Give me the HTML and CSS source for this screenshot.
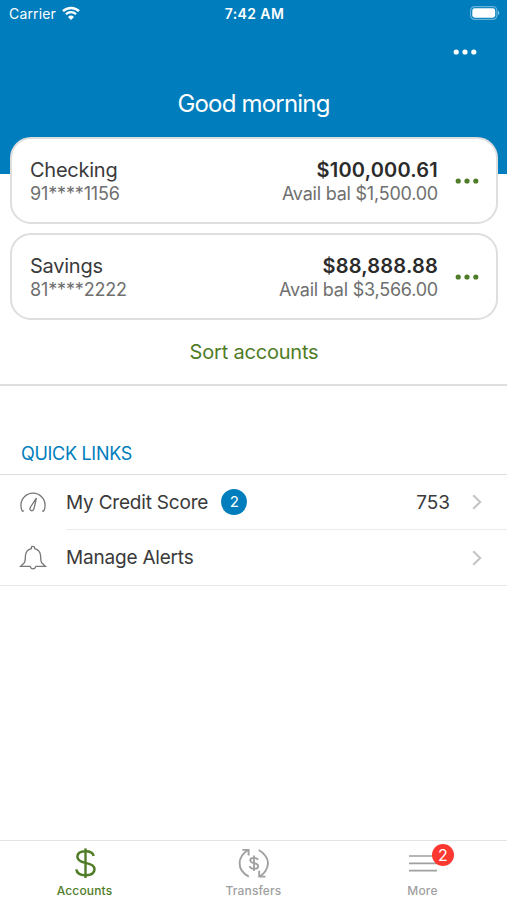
FILE: index.html
```
<!DOCTYPE html>
<html lang="en">
<head>
    <meta charset="utf-8">
    <meta name="viewport" content="width=device-width, initial-scale=1">
    <title>Accounts</title>
    <link rel="stylesheet" href="styles.css">
</head>

<body>

<header class="header">
    <div class="status">
        <div class="carrier">
            <span>Carrier</span>
            <svg width="18" height="14" viewBox="0 0 18 14">
                <path d="M1 5.2 A11.6 11.6 0 0 1 17 5.2" fill="none" stroke="#fff" stroke-width="2.5"/>
                <path d="M3.9 8.2 A7.4 7.4 0 0 1 14.1 8.2" fill="none" stroke="#fff" stroke-width="2.2"/>
                <path d="M9 14 L6 10.9 A4.3 4.3 0 0 1 12 10.9 Z" fill="#fff"/>
            </svg>
        </div>
        <div class="time">7:42 AM</div>
        <div class="battery">
            <svg width="30" height="14" viewBox="0 0 30 14">
                <rect x="0.6" y="0.6" width="26.3" height="12.8" rx="4" fill="none" stroke="#fff" stroke-opacity="0.4" stroke-width="1.2"/>
                <rect x="2.3" y="2.3" width="22.9" height="9.4" rx="2.4" fill="#fff"/>
                <path d="M28 4.8 A2.4 2.4 0 0 1 28 9.2 Z" fill="#fff" fill-opacity="0.5"/>
            </svg>
        </div>
    </div>
    <div class="toolbar">
        <svg class="dots" width="24" height="6" viewBox="0 0 24 6">
            <circle cx="3.2" cy="3" r="2.6"/>
            <circle cx="12" cy="3" r="2.6"/>
            <circle cx="20.8" cy="3" r="2.6"/>
        </svg>
    </div>
    <h1 class="greeting">Good morning</h1>
</header>

<main>
    <section class="accounts">
        <div class="card">
            <div class="account">
                <div class="name">Checking</div>
                <div class="number">91****1156</div>
            </div>
            <div class="balance">
                <div class="amount">$100,000.61</div>
                <div class="avail">Avail bal $1,500.00</div>
            </div>
            <svg class="dots" width="24" height="6" viewBox="0 0 24 6">
                <circle cx="3.2" cy="3" r="2.6"/>
                <circle cx="12" cy="3" r="2.6"/>
                <circle cx="20.8" cy="3" r="2.6"/>
            </svg>
        </div>
        <div class="card">
            <div class="account">
                <div class="name">Savings</div>
                <div class="number">81****2222</div>
            </div>
            <div class="balance">
                <div class="amount">$88,888.88</div>
                <div class="avail">Avail bal $3,566.00</div>
            </div>
            <svg class="dots" width="24" height="6" viewBox="0 0 24 6">
                <circle cx="3.2" cy="3" r="2.6"/>
                <circle cx="12" cy="3" r="2.6"/>
                <circle cx="20.8" cy="3" r="2.6"/>
            </svg>
        </div>
        <a class="sort">Sort accounts</a>
    </section>

    <section class="links">
        <h2>QUICK LINKS</h2>
        <div class="row">
            <svg class="icon" width="28" height="28" viewBox="0 0 28 28">
                <path d="M4.8 22 H3.3 Q1.9 19.2 1.9 16.3 A12.1 12.1 0 0 1 26.1 16.3 Q26.1 19.2 24.7 22 H23.2"/>
                <path d="M17.4 9 L11.4 18.2 Q10.2 20.8 12.2 21.6 Q14.2 22.2 15 19.6 Z"/>
            </svg>
            <div class="cell">
                <span class="label">My Credit Score</span>
                <span class="count">2</span>
                <span class="value">753</span>
                <svg class="chevron" width="10" height="16" viewBox="0 0 10 16"><path d="M1.2 1.2 L8.2 8 L1.2 14.8"/></svg>
            </div>
        </div>
        <div class="row">
            <svg class="icon" width="28" height="28" viewBox="0 0 28 28">
                <path d="M12.4 4.6 V3.6 Q12.4 2.3 14 2.3 Q15.6 2.3 15.6 3.6 V4.6 Q21.3 6 21.6 12 Q21.6 17.4 22.9 19 L26.4 22.4 H16.9 Q16 24.8 14 24.8 Q12 24.8 11.1 22.4 H1.6 L5.1 19 Q6.4 17.4 6.4 12 Q6.7 6 12.4 4.6 Z"/>
            </svg>
            <div class="cell">
                <span class="label">Manage Alerts</span>
                <svg class="chevron last" width="10" height="16" viewBox="0 0 10 16"><path d="M1.2 1.2 L8.2 8 L1.2 14.8"/></svg>
            </div>
        </div>
    </section>
</main>

<nav class="tabs">
    <a class="tab active">
        <svg width="32" height="32" viewBox="0 0 32 32">
            <path d="M16.5 1.4 V31" stroke-width="2.4"/>
            <path d="M24.6 9 Q23.8 4.2 16.5 4.2 Q8.4 4.2 8.4 9.8 Q8.4 14.2 16.5 15.9 Q25.5 17.6 25.5 22.2 Q25.4 28.2 16.5 28.2 Q8.1 28.2 7.3 22.4" stroke-width="2.5"/>
        </svg>
        <span>Accounts</span>
    </a>
    <a class="tab">
        <svg width="32" height="32" viewBox="0 0 32 32">
            <path d="M10.8 29.6 Q1.6 24.6 1.6 16.2 Q1.8 8 9.8 3.2 M4.4 2.9 H10.6 V8.6" stroke-width="1.9"/>
            <path d="M20.7 3 Q29.6 8 30 16.2 Q29.6 24 22.2 29.2 M27.5 29.6 H21.2 V23.8" stroke-width="1.9"/>
            <path d="M19.8 13 Q19.4 10.8 16 10.8 Q12.2 10.8 12.2 13.3 Q12.2 15.4 16 16.1 Q20.2 16.9 20.2 19.2 Q20.2 21.8 16 21.8 Q12.2 21.8 11.7 19.1 M16 8.6 V24" stroke-width="1.8"/>
        </svg>
        <span>Transfers</span>
    </a>
    <a class="tab">
        <svg width="32" height="32" viewBox="0 0 32 32">
            <path d="M2 9 H30 M2 16.3 H30 M2 23.6 H30" stroke-width="1.7"/>
        </svg>
        <b class="badge">2</b>
        <span>More</span>
    </a>
</nav>

</body>
</html>
```

FILE: styles.css
```
* {
    box-sizing: border-box;
}

body {
    display: flex;
    flex-direction: column;
    height: 900px;
    margin: 0;
    background: #fff;
    color: #3a3a3a;
    font-family: Inter, "Liberation Sans", sans-serif;
    overflow: hidden;
}

.header {
    height: 174px;
    background: #007dbc;
    color: #fff;
}

.status {
    display: grid;
    grid-template-columns: 1fr auto 1fr;
    align-items: center;
    height: 26px;
    padding: 0 7px 0 9px;
    font-size: 14px;
}

.carrier {
    display: flex;
    align-items: center;
    gap: 6px;
    letter-spacing: 0.15px;
}

.time {
    font-weight: 600;
    letter-spacing: 0.4px;
}

.battery {
    display: flex;
    justify-content: flex-end;
}

.toolbar {
    display: flex;
    justify-content: flex-end;
    align-items: center;
    height: 52px;
    padding-right: 30px;
}

.dots {
    fill: #4f7c27;
}

.toolbar .dots {
    fill: #fff;
}

.greeting {
    margin: 0;
    font-size: 24px;
    font-weight: 400;
    letter-spacing: -0.8px;
    line-height: 52px;
    text-align: center;
}

.accounts {
    display: flex;
    flex-direction: column;
    gap: 9px;
    height: 249px;
    margin-top: -37px;
    padding: 0 9px 0 10px;
    border-bottom: 2px solid #dedede;
}

.card {
    display: flex;
    align-items: center;
    height: 87px;
    padding: 0 17px 0 18px;
    background: #fff;
    border: 2px solid #dedede;
    border-radius: 21px;
}

.account, .balance {
    padding-top: 2px;
}

.account {
    flex: 1;
}

.name {
    font-size: 20px;
    letter-spacing: -0.25px;
    line-height: 25px;
}

.number, .avail {
    color: #6f6f6f;
    font-size: 18px;
    letter-spacing: -0.15px;
    line-height: 22px;
}

.avail {
    letter-spacing: -0.22px;
}

.balance {
    margin-right: 17px;
    text-align: right;
}

.amount {
    color: #2b2b2b;
    font-size: 20px;
    font-weight: 600;
    letter-spacing: 0.2px;
    line-height: 25px;
}

.sort {
    color: #4f7c27;
    font-size: 20px;
    letter-spacing: -0.2px;
    line-height: 46px;
    text-align: center;
}

h2 {
    margin: 0;
    padding: 55px 0 8px 21px;
    border-bottom: 1px solid #ddd;
    color: #007dbc;
    font-size: 18px;
    font-weight: 400;
    letter-spacing: -0.3px;
    line-height: 25px;
}

.row {
    display: flex;
    align-items: center;
    height: 55px;
    padding-left: 19px;
}

.row:last-child {
    height: 56px;
    border-bottom: 1px solid #e6e6e6;
}

.icon {
    fill: none;
    stroke: #777;
    stroke-width: 1.3;
}

.cell {
    display: flex;
    flex: 1;
    align-items: center;
    height: 55px;
    margin-left: 19px;
    padding-right: 25px;
    border-bottom: 1px solid #ececec;
    font-size: 19px;
}

.row:last-child .cell {
    border-bottom: 0;
}

.label {
    letter-spacing: -0.2px;
}

.count {
    width: 26px;
    margin-left: 13px;
    background: #007dbc;
    border-radius: 50%;
    color: #fff;
    font-size: 15px;
    line-height: 26px;
    text-align: center;
}

.value {
    margin-left: auto;
    margin-right: 22px;
}

.chevron {
    fill: none;
    stroke: #c4c4c4;
    stroke-width: 2;
}

.last {
    margin-left: auto;
}

.tabs {
    display: grid;
    grid-template-columns: 1fr 1fr 1fr;
    height: 60px;
    margin-top: auto;
    border-top: 1px solid #e3e3e3;
}

.tab {
    position: relative;
    display: flex;
    flex-direction: column;
    align-items: center;
    padding-top: 6px;
    color: #a0a0a0;
    font-size: 12px;
    font-weight: 500;
    letter-spacing: 0.15px;
    line-height: 24px;
}

.tab svg {
    fill: none;
    stroke: currentColor;
}

.active {
    color: #4f7c27;
}

.badge {
    position: absolute;
    top: 3px;
    left: 94px;
    width: 22px;
    background: #fd3830;
    border-radius: 50%;
    color: #fff;
    font-size: 16px;
    font-weight: 400;
    line-height: 22px;
    text-align: center;
}
```
